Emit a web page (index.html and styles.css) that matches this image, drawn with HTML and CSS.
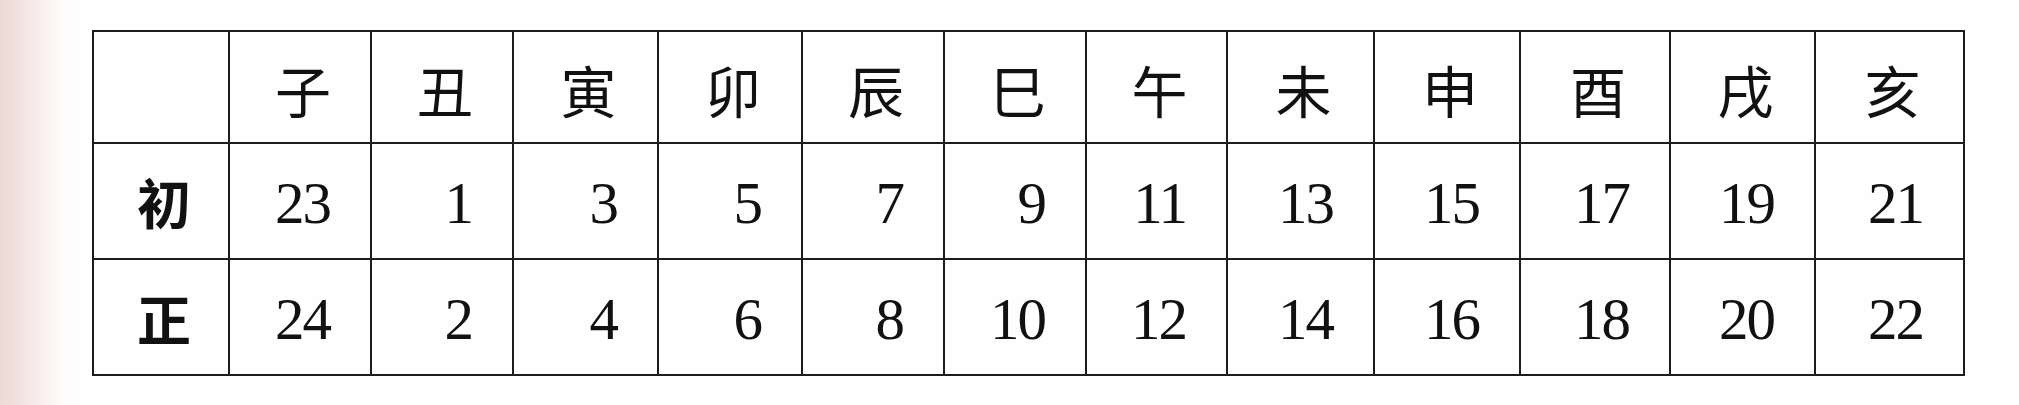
FILE: index.html
```html
<!DOCTYPE html>
<html lang="zh">
<head>
<meta charset="utf-8">
<title>十二时辰</title>
<link rel="stylesheet" href="styles.css">
</head>
<body>
<div class="page">
  <div class="grid">
    <div class="cell corner"></div>
    <div class="cell head">子</div>
    <div class="cell head">丑</div>
    <div class="cell head">寅</div>
    <div class="cell head">卯</div>
    <div class="cell head">辰</div>
    <div class="cell head">巳</div>
    <div class="cell head">午</div>
    <div class="cell head">未</div>
    <div class="cell head">申</div>
    <div class="cell head">酉</div>
    <div class="cell head">戌</div>
    <div class="cell head">亥</div>

    <div class="cell label">初</div>
    <div class="cell num">23</div>
    <div class="cell num">1</div>
    <div class="cell num">3</div>
    <div class="cell num">5</div>
    <div class="cell num">7</div>
    <div class="cell num">9</div>
    <div class="cell num">11</div>
    <div class="cell num">13</div>
    <div class="cell num">15</div>
    <div class="cell num">17</div>
    <div class="cell num">19</div>
    <div class="cell num">21</div>

    <div class="cell label">正</div>
    <div class="cell num">24</div>
    <div class="cell num">2</div>
    <div class="cell num">4</div>
    <div class="cell num">6</div>
    <div class="cell num">8</div>
    <div class="cell num">10</div>
    <div class="cell num">12</div>
    <div class="cell num">14</div>
    <div class="cell num">16</div>
    <div class="cell num">18</div>
    <div class="cell num">20</div>
    <div class="cell num">22</div>
  </div>
</div>
</body>
</html>
```

FILE: styles.css
```css
html, body {
  margin: 0;
  padding: 0;
}

body {
  width: 2019px;
  height: 405px;
  overflow: hidden;
  background: linear-gradient(to right, #ecdad6 0px, #f1e4e1 22px, #f8f0ee 42px, #fdfbfa 60px, #fefefe 78px);
}

.page {
  padding: 30px 0 0 92px;
}

.grid {
  display: grid;
  grid-template-columns: 136px 142px 142px 145px 144px 142px 142px 141px 147px 146px 150px 145px 149px;
  grid-template-rows: 112px 116px 116px;
  width: max-content;
  border-top: 2px solid #1c1c1c;
  border-left: 2px solid #1c1c1c;
  background: #fefefe;
}

.cell {
  box-sizing: border-box;
  border-right: 2px solid #1c1c1c;
  border-bottom: 2px solid #1c1c1c;
  display: flex;
  align-items: center;
  color: #111;
}

.head {
  justify-content: center;
  padding-left: 6px;
  padding-top: 2px;
  font-family: "Noto Sans CJK SC", "Noto Sans CJK TC", sans-serif;
  font-weight: 400;
  font-size: 56px;
}

.label {
  justify-content: center;
  padding-left: 6px;
  font-family: "Noto Sans CJK SC", "Noto Sans CJK TC", sans-serif;
  font-weight: 700;
  font-size: 54px;
}

.num {
  justify-content: flex-end;
  padding-right: 40px;
  padding-top: 4px;
  font-family: "Liberation Serif", "Times New Roman", serif;
  font-size: 59px;
  letter-spacing: -2px;
}
```
